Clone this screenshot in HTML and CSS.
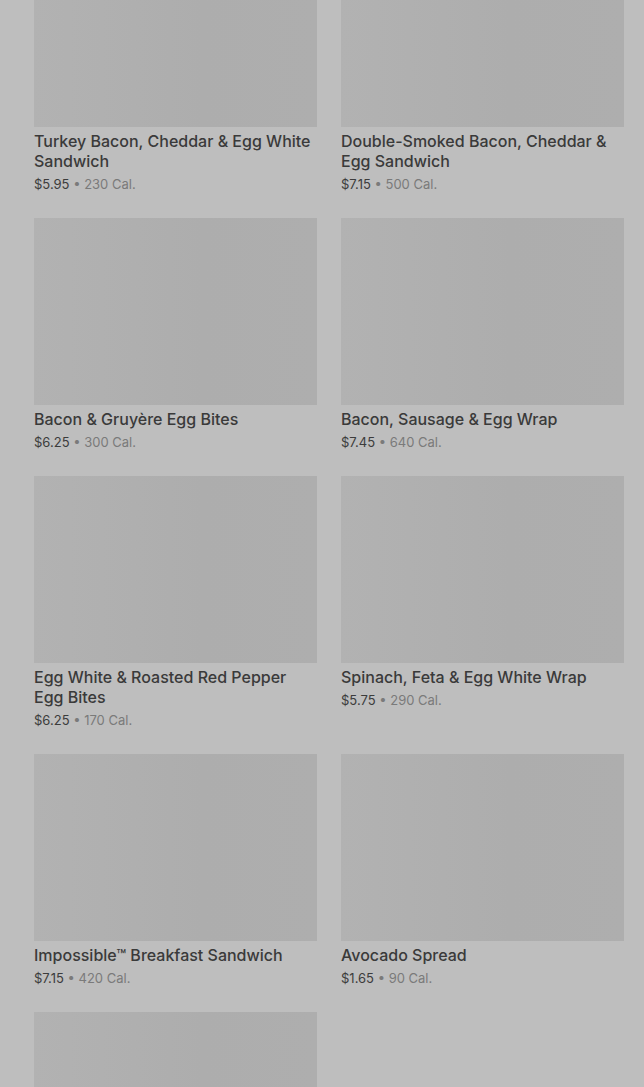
FILE: index.html
```html
<!DOCTYPE html>
<html lang="en">
<head>
    <meta charset="UTF-8">
    <meta name="viewport" content="width=device-width, initial-scale=1.0">
    <title>Breakfast Menu</title>
    <link rel="stylesheet" href="styles.css">
</head>
<body>
    <div class="menu">
        <ul class="menu-grid">
            <li class="item">
                <div class="item-img"></div>
                <h3>Turkey Bacon, Cheddar &amp; Egg White Sandwich</h3>
                <p class="meta"><span class="price">$5.95</span> • 230 Cal.</p>
            </li>
            <li class="item">
                <div class="item-img"></div>
                <h3>Double-Smoked Bacon, Cheddar &amp; Egg Sandwich</h3>
                <p class="meta"><span class="price">$7.15</span> • 500 Cal.</p>
            </li>
            <li class="item">
                <div class="item-img"></div>
                <h3>Bacon &amp; Gruyère Egg Bites</h3>
                <p class="meta"><span class="price">$6.25</span> • 300 Cal.</p>
            </li>
            <li class="item">
                <div class="item-img"></div>
                <h3>Bacon, Sausage &amp; Egg Wrap</h3>
                <p class="meta"><span class="price">$7.45</span> • 640 Cal.</p>
            </li>
            <li class="item">
                <div class="item-img"></div>
                <h3>Egg White &amp; Roasted Red Pepper Egg Bites</h3>
                <p class="meta"><span class="price">$6.25</span> • 170 Cal.</p>
            </li>
            <li class="item">
                <div class="item-img"></div>
                <h3>Spinach, Feta &amp; Egg White Wrap</h3>
                <p class="meta"><span class="price">$5.75</span> • 290 Cal.</p>
            </li>
            <li class="item">
                <div class="item-img"></div>
                <h3>Impossible™ Breakfast Sandwich</h3>
                <p class="meta"><span class="price">$7.15</span> • 420 Cal.</p>
            </li>
            <li class="item">
                <div class="item-img"></div>
                <h3>Avocado Spread</h3>
                <p class="meta"><span class="price">$1.65</span> • 90 Cal.</p>
            </li>
            <li class="item">
                <div class="item-img"></div>
            </li>
        </ul>
    </div>
</body>
</html>
```

FILE: styles.css
```css
* {
    margin: 0;
    padding: 0;
    box-sizing: border-box;
    font-family: Inter, 'Noto Sans', sans-serif;
}

body {
    background: #bebebe;
    height: 1087px;
    overflow: hidden;
}

.menu {
    padding: 0 20px 0 34px;
    margin-top: -60px;
}

.menu-grid {
    list-style: none;
    display: grid;
    grid-template-columns: 1fr 1fr;
    column-gap: 24px;
}

.item {
    padding-bottom: 24px;
}

.item-img {
    height: 187px;
    background: linear-gradient(90deg, #b2b2b2, #adadad 60%, #aeaeae);
}

.item h3 {
    margin-top: 4px;
    padding-right: 4px;
    font-size: 16px;
    line-height: 20px;
    font-weight: 500;
    color: #3a3a3a;
}

.meta {
    margin-top: 3px;
    font-size: 13px;
    line-height: 20px;
    color: #7a7a7a;
}

.price {
    color: #3c3c3c;
}
```
